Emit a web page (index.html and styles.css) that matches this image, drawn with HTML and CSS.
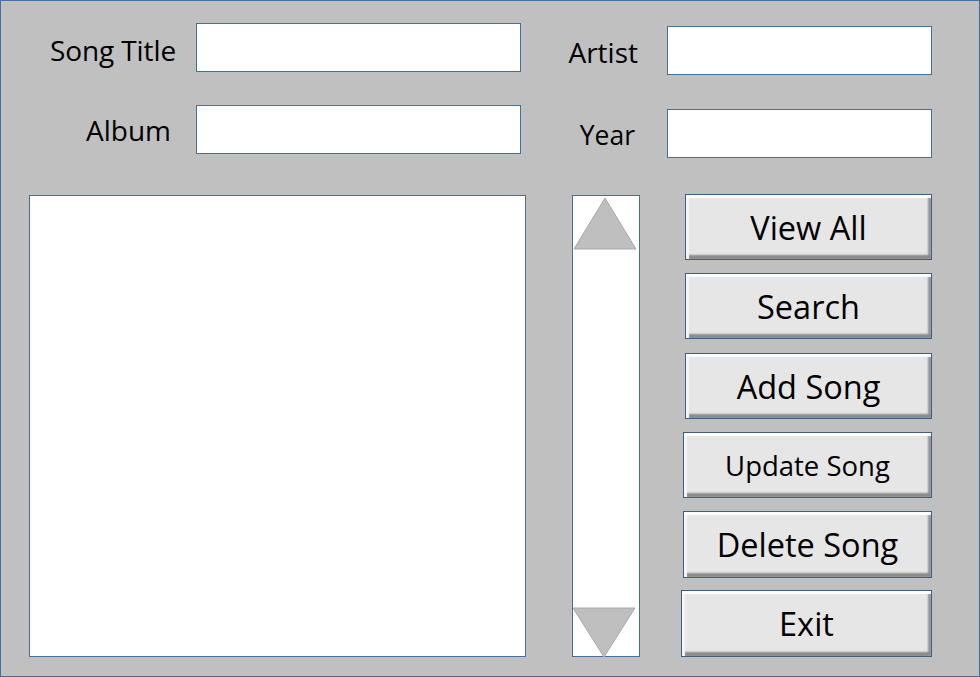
FILE: index.html
```html
<!DOCTYPE html>
<html>
<head>
<meta charset="utf-8">
<link rel="stylesheet" href="styles.css">
</head>
<body>
<div class="frame">
  <div class="top">
    <div class="fields fields-left">
      <label class="label label-title">Song Title</label>
      <div class="input input-wide"></div>
      <label class="label label-album">Album</label>
      <div class="input input-wide"></div>
    </div>
    <div class="fields fields-right">
      <label class="label label-artist">Artist</label>
      <div class="input input-narrow"></div>
      <label class="label label-year">Year</label>
      <div class="input input-narrow"></div>
    </div>
  </div>
  <div class="bottom">
    <div class="listbox"></div>
    <div class="scrollbar">
      <svg class="arrow" width="66" height="54" viewBox="0 0 66 54">
        <polygon points="1,53 32,2 63,53" fill="#bfbfbf" stroke="#a9a9a9" stroke-width="1"/>
      </svg>
      <svg class="arrow arrow-down" width="66" height="50" viewBox="0 0 66 50">
        <polygon points="0,1 62,1 31,50" fill="#bfbfbf" stroke="#a9a9a9" stroke-width="1"/>
      </svg>
    </div>
    <div class="buttons">
      <div class="btn btn-big">View All</div>
      <div class="btn btn-big">Search</div>
      <div class="btn btn-big btn-shift">Add Song</div>
      <div class="btn btn-small btn-w2">Update Song</div>
      <div class="btn btn-big btn-w2 btn-tall">Delete Song</div>
      <div class="btn btn-big btn-w3 btn-tall btn-pull">Exit</div>
    </div>
  </div>
</div>
</body>
</html>
```
FILE: styles.css
```css
* { box-sizing: border-box; }
html, body { margin: 0; padding: 0; background: #c0c0c0; }
.frame {
  width: 980px;
  height: 677px;
  border: 1px solid #41719c;
  background: #c0c0c0;
  font-family: "Open Sans", "Liberation Sans", sans-serif;
  color: #000;
  overflow: hidden;
}
.top {
  display: flex;
  padding-top: 22px;
  align-items: flex-start;
}
.fields {
  display: grid;
  align-items: center;
}
.fields-left {
  grid-template-columns: 195px 325px;
  row-gap: 33px;
}
.fields-right {
  grid-template-columns: 146px 265px;
  row-gap: 34px;
  margin-top: 3px;
}
.label {
  font-size: 28px;
  text-align: right;
  line-height: 32px;
}
.label-title { padding-right: 20px; margin-top: 4px; letter-spacing: -0.1px; }
.label-album { padding-right: 25px; margin-top: 0; }
.label-artist { padding-right: 29px; margin-top: 2px; }
.label-year { padding-right: 32px; margin-top: 2px; font-size: 26.5px; }
.input {
  height: 49px;
  background: #fff;
  border: 1px solid #41719c;
}
.bottom {
  display: flex;
  align-items: flex-start;
  margin-top: 36px;
  padding-left: 28px;
}
.listbox {
  width: 497px;
  height: 462px;
  margin-top: 1px;
  background: #fff;
  border: 1px solid #41719c;
}
.scrollbar {
  width: 68px;
  height: 462px;
  margin-top: 1px;
  margin-left: 46px;
  background: #fff;
  border: 1px solid #41719c;
  display: flex;
  flex-direction: column;
  justify-content: space-between;
  overflow: visible;
}
.arrow { display: block; }
.arrow-down { margin-bottom: -1px; }
.buttons {
  margin-left: auto;
  margin-right: 47px;
  display: flex;
  flex-direction: column;
  align-items: flex-end;
  gap: 13px;
}
.btn {
  width: 247px;
  height: 66px;
  background: #e6e6e6;
  border: 1px solid #3d5f80;
  display: flex;
  align-items: center;
  justify-content: center;
  box-shadow:
    inset 0 3px 1px #ffffff,
    inset 3px 0 1px #f5f5f5,
    inset 0 -4px 2px #8a8a8a,
    inset -3px 0 2px #949494;
}
.btn-big { font-size: 32.5px; }
.btn-small { font-size: 27.5px; }
.btn-w2 { width: 249px; }
.btn-w3 { width: 251px; }
.btn-tall { height: 67px; }
.btn-shift { margin-top: 1px; }
.btn-pull { margin-top: -1px; }
```
